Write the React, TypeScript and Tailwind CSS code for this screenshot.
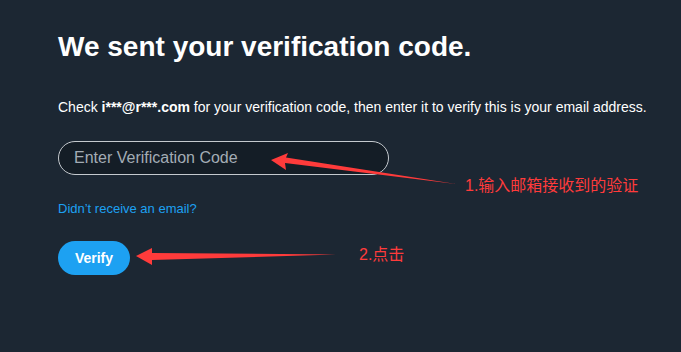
import React from "react";

export default function App() {
  return (
    <div className="relative w-[681px] h-[352px] bg-[#1c2733] overflow-hidden" style={{ fontFamily: '"Liberation Sans", Arial, sans-serif' }}>
      <div className="flex flex-col pl-[58px] pt-[31px]">
        <h1 className="text-[28px] leading-[32px] font-bold text-white">We sent your verification code.</h1>
        <p className="mt-[35px] text-[14px] leading-[18px] text-white">
          Check <span className="font-bold">i***@r***.com</span> for your verification code, then enter it to verify this is your email address.
        </p>
        <div className="mt-[25px] w-[331px] h-[34px] rounded-full border border-[#c4c9ce] bg-[#141d26] flex items-center pl-[15px]">
          <span className="text-[16px] text-[#a3acb5]">Enter Verification Code</span>
        </div>
        <a className="mt-[26px] text-[13px] leading-[16px] text-[#1da1f2]">Didn’t receive an email?</a>
        <div className="mt-[24px]">
          <button className="w-[72px] h-[34px] rounded-full bg-[#1da1f2] text-white font-bold text-[14px] flex items-center justify-center">Verify</button>
        </div>
      </div>
      <svg className="absolute left-0 top-0" width="681" height="352">
        <polygon points="271,160 288,153 286,157.5 456,184 285,163 286,170" fill="#ff3b3b" />
        <polygon points="136,256 152,248 152,253 336,254.5 152,260 152,265" fill="#ff3b3b" />
      </svg>
      <div className="absolute left-[465px] top-[176px] text-[16px] leading-[20px] text-[#ff3b3b]" style={{ fontFamily: '"Liberation Sans", "Noto Sans CJK SC", sans-serif' }}>1.输入邮箱接收到的验证</div>
      <div className="absolute left-[359px] top-[245px] text-[16px] leading-[20px] text-[#ff3b3b]" style={{ fontFamily: '"Liberation Sans", "Noto Sans CJK SC", sans-serif' }}>2.点击</div>
    </div>
  );
}
